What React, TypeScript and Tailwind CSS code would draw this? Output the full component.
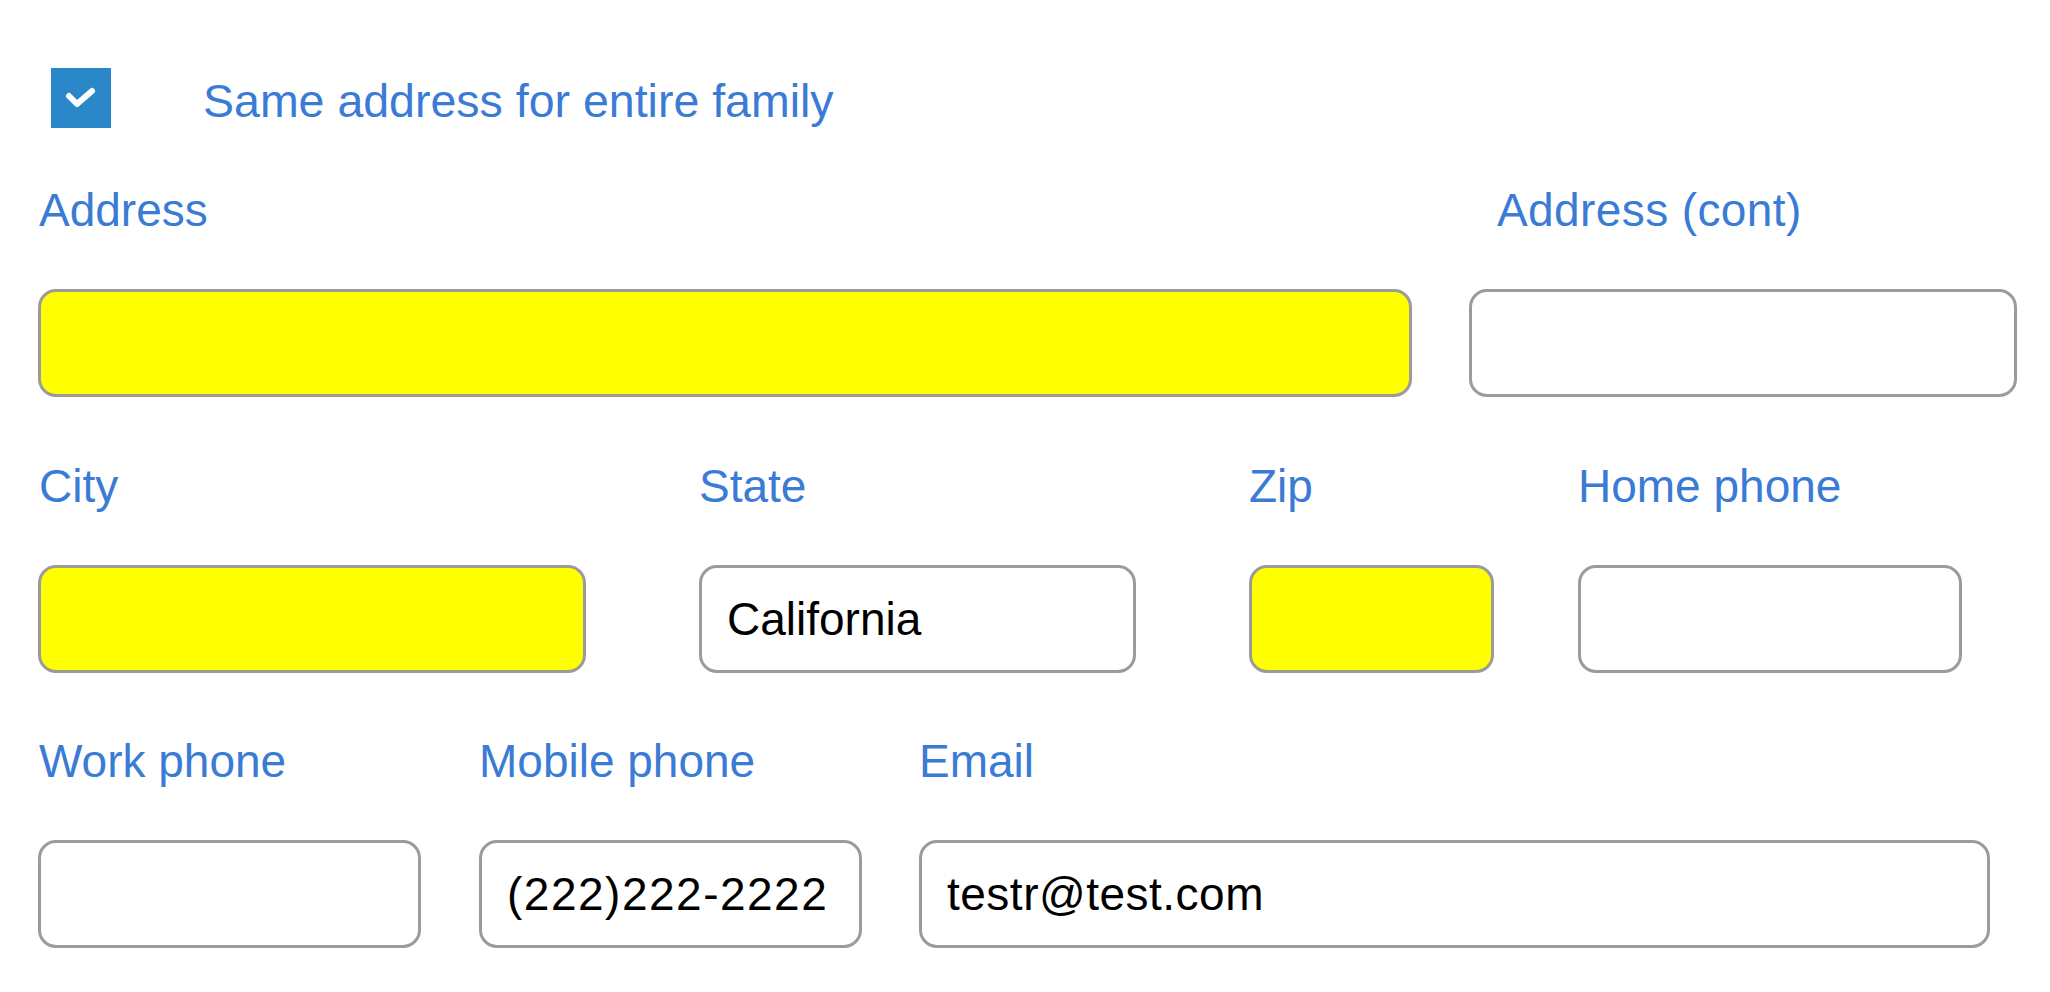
import React from "react";

const font = { fontFamily: '"Liberation Sans", Arial, sans-serif' };

function Field({
  label,
  width,
  className = "",
  yellow = false,
  value = "",
  labelClass = "",
  valueClass = "",
}: {
  label: string;
  width: string;
  className?: string;
  yellow?: boolean;
  value?: string;
  labelClass?: string;
  valueClass?: string;
}) {
  return (
    <div className={`flex flex-col shrink-0 ${width} ${className}`}>
      <div className={`h-[54px] leading-[54px] text-[46px] text-[#3a7bd5] whitespace-nowrap ${labelClass}`}>
        {label}
      </div>
      <div
        className={`mt-[52px] h-[108px] rounded-[18px] border-[3px] border-[#9b9b9b] flex items-center pl-[25px] text-[46px] text-black whitespace-nowrap overflow-hidden ${
          yellow ? "bg-[#ffff00]" : "bg-white"
        }`}
      >
        <span className={valueClass}>{value}</span>
      </div>
    </div>
  );
}

export default function App() {
  return (
    <div className="w-[2050px] h-[992px] bg-white overflow-hidden" style={font}>
      <div className="pl-[38px] pt-[68px]">
        <div className="flex items-center ml-[13px]">
          <div className="w-[60px] h-[60px] bg-[#2a88c8] flex items-center justify-center shrink-0">
            <svg width="60" height="60" viewBox="0 0 60 60">
              <polyline
                points="18,28 26,36 41,23"
                fill="none"
                stroke="white"
                strokeWidth="6"
                strokeLinecap="round"
                strokeLinejoin="round"
              />
            </svg>
          </div>
          <div className="ml-[92px] mt-[6px] text-[46.5px] leading-[54px] text-[#3a7bd5] whitespace-nowrap">
            Same address for entire family
          </div>
        </div>

        <div className="flex mt-[55px]">
          <Field label="Address" width="w-[1374px]" yellow labelClass="pl-[1px]" />
          <Field label="Address (cont)" width="w-[548px]" className="ml-[57px]" labelClass="pl-[28px] tracking-[0.4px]" />
        </div>

        <div className="flex mt-[62px]">
          <Field label="City" width="w-[548px]" yellow labelClass="pl-[1px]" />
          <Field label="State" width="w-[437px]" className="ml-[113px]" value="California" />
          <Field label="Zip" width="w-[245px]" className="ml-[113px]" yellow />
          <Field label="Home phone" width="w-[384px]" className="ml-[84px]" />
        </div>

        <div className="flex mt-[61px]">
          <Field label="Work phone" width="w-[383px]" labelClass="pl-[1px]" />
          <Field
            label="Mobile phone"
            width="w-[383px]"
            className="ml-[58px]"
            value="(222)222-2222"
            valueClass="tracking-[1.5px]"
          />
          <Field
            label="Email"
            width="w-[1071px]"
            className="ml-[57px]"
            value="testr@test.com"
            valueClass="tracking-[0.5px]"
          />
        </div>
      </div>
    </div>
  );
}
